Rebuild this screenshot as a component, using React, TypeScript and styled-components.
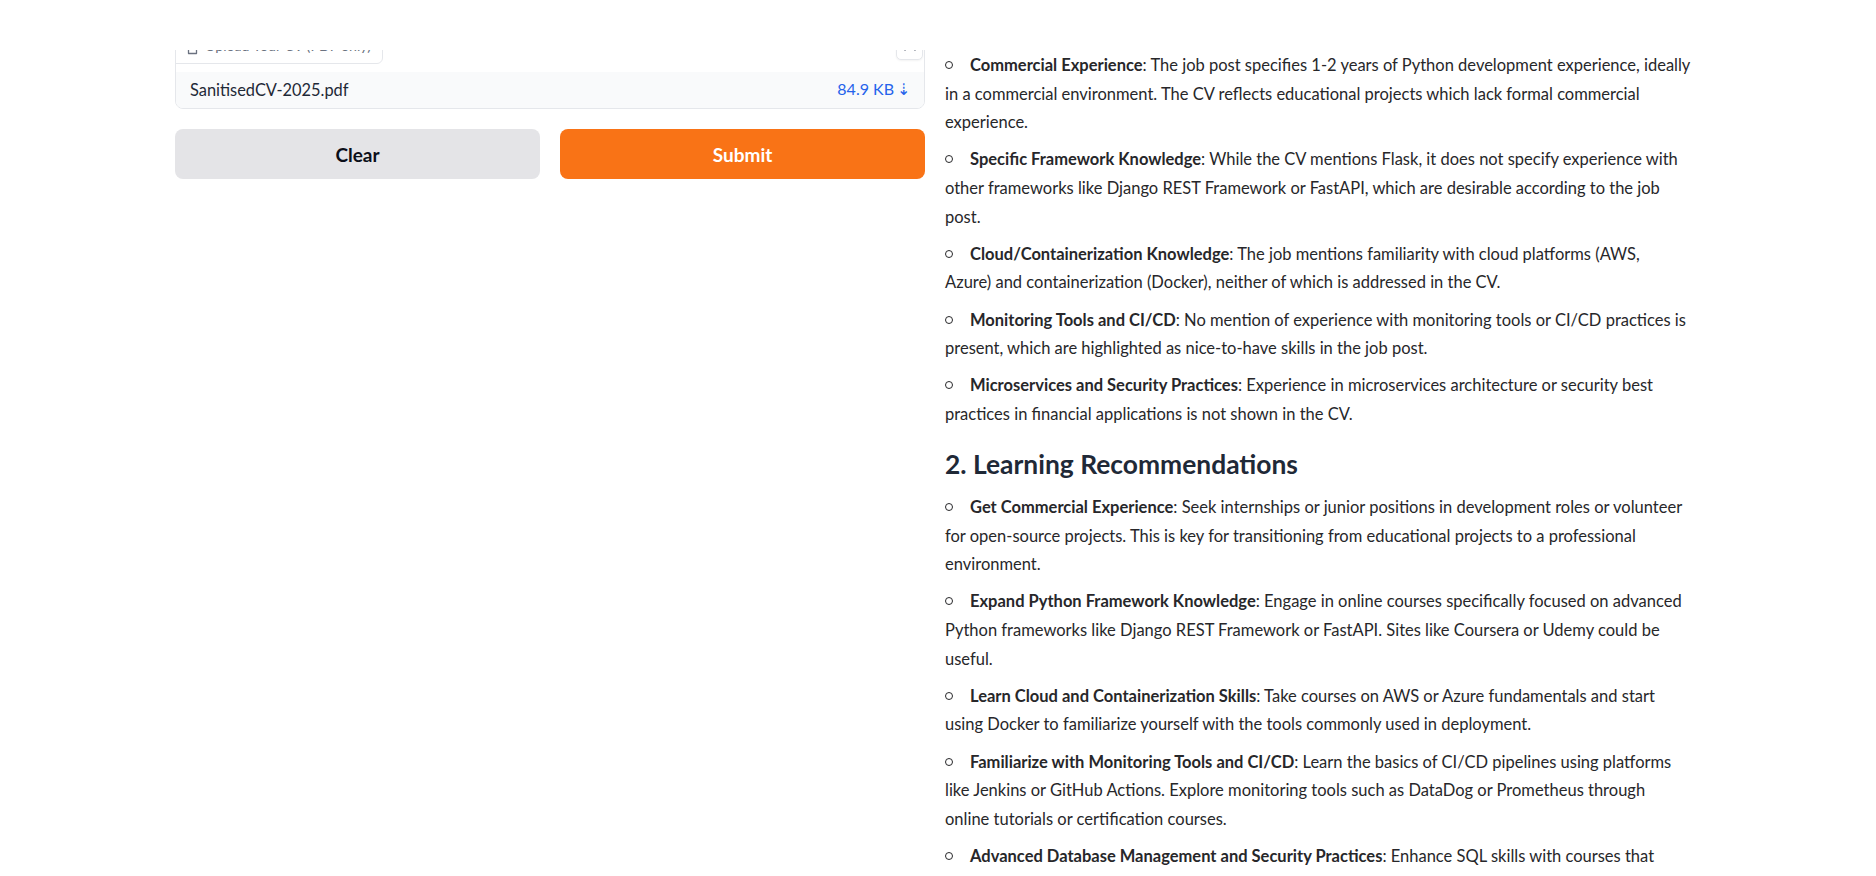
import React from "react";
import styled, { createGlobalStyle } from "styled-components";

const Global = createGlobalStyle`
  html, body { margin: 0; padding: 0; background: #ffffff; }
  body { font-family: Lato, "Noto Sans", "Liberation Sans", sans-serif; color: #1f2937; }
  * { box-sizing: border-box; }
`;

const Shell = styled.div`
  height: 876px;
  display: flex;
  flex-direction: column;
  overflow: hidden;
`;

const TopBand = styled.div`
  height: 50px;
  flex: none;
  background: #ffffff;
`;

const Viewport = styled.main`
  flex: 1;
  overflow: hidden;
`;

const Columns = styled.div`
  margin-top: -30px;
  padding: 0 175px;
  display: grid;
  grid-template-columns: 750px 1fr;
  column-gap: 20px;
  align-items: start;
`;

const LeftCol = styled.div`
  display: flex;
  flex-direction: column;
  gap: 20px;
`;

const FileBlock = styled.div`
  position: relative;
  border: 1px solid #e5e7eb;
  border-radius: 8px;
  padding-top: 51px;
  overflow: hidden;
  background: #ffffff;
`;

const BlockLabel = styled.div`
  position: absolute;
  top: -1px;
  left: -1px;
  height: 44px;
  display: flex;
  align-items: flex-end;
  gap: 7px;
  padding: 0 11px 8px 11px;
  border: 1px solid #e5e7eb;
  border-radius: 0 0 6px 0;
  background: #ffffff;
  color: #6b7280;
  font-size: 14.2px;
  line-height: 18px;
  white-space: nowrap;
`;

const IconButtons = styled.div`
  position: absolute;
  top: 12px;
  right: 1px;
  width: 27px;
  height: 27px;
  display: flex;
  align-items: flex-start;
  justify-content: center;
  padding-top: 5px;
  border: 1px solid #e5e7eb;
  border-radius: 5px;
  background: #ffffff;
  color: #6b7280;
  box-shadow: 0 1px 2px rgba(0, 0, 0, 0.05);
`;

const FileRow = styled.div`
  height: 36px;
  display: flex;
  align-items: center;
  justify-content: space-between;
  padding: 0 14px 2px 14px;
  background: #f9fafb;
  font-size: 16.4px;
`;

const FileName = styled.span`
  color: #1f2937;
`;

const FileSize = styled.a`
  color: #2563eb;
  text-decoration: none;
  font-size: 16px;
`;

const DownArrow = styled.span`
  margin-left: 3px;
`;

const ButtonRow = styled.div`
  display: grid;
  grid-template-columns: 1fr 1fr;
  gap: 20px;
`;

const Button = styled.button<{ $primary?: boolean }>`
  height: 50px;
  border: none;
  border-radius: 8px;
  font-family: Lato, "Noto Sans", sans-serif;
  font-size: 19px;
  font-weight: 700;
  cursor: pointer;
  background: ${(p) => (p.$primary ? "#f97316" : "#e4e4e7")};
  color: ${(p) => (p.$primary ? "#ffffff" : "#0b0f19")};
`;

const Prose = styled.div`
  padding-top: 31px;
  font-size: 16.5px;
  line-height: 28.6px;
  color: #27272a;
`;

const List = styled.ul`
  list-style: none;
  margin: 0;
  padding: 0;
`;

const Item = styled.li`
  margin: 0 0 8.6px 0;
  white-space: pre;
  &::before {
    content: "";
    display: inline-block;
    width: 6px;
    height: 6px;
    border: 1px solid #27272a;
    border-radius: 50%;
    margin-right: 17px;
    vertical-align: 2px;
  }
  strong {
    font-weight: 700;
  }
`;

const Heading = styled.h2`
  margin: 18px 0 12.5px 0;
  font-size: 26.4px;
  line-height: 34px;
  font-weight: 700;
  color: #1f2937;
`;

const gaps: [string, string][] = [
  [
    "Commercial Experience",
    "The job post specifies 1-2 years of Python development experience, ideally\nin a commercial environment. The CV reflects educational projects which lack formal commercial\nexperience.",
  ],
  [
    "Specific Framework Knowledge",
    "While the CV mentions Flask, it does not specify experience with\nother frameworks like Django REST Framework or FastAPI, which are desirable according to the job\npost.",
  ],
  [
    "Cloud/Containerization Knowledge",
    "The job mentions familiarity with cloud platforms (AWS,\nAzure) and containerization (Docker), neither of which is addressed in the CV.",
  ],
  [
    "Monitoring Tools and CI/CD",
    "No mention of experience with monitoring tools or CI/CD practices is\npresent, which are highlighted as nice-to-have skills in the job post.",
  ],
  [
    "Microservices and Security Practices",
    "Experience in microservices architecture or security best\npractices in financial applications is not shown in the CV.",
  ],
];

const recs: [string, string][] = [
  [
    "Get Commercial Experience",
    "Seek internships or junior positions in development roles or volunteer\nfor open-source projects. This is key for transitioning from educational projects to a professional\nenvironment.",
  ],
  [
    "Expand Python Framework Knowledge",
    "Engage in online courses specifically focused on advanced\nPython frameworks like Django REST Framework or FastAPI. Sites like Coursera or Udemy could be\nuseful.",
  ],
  [
    "Learn Cloud and Containerization Skills",
    "Take courses on AWS or Azure fundamentals and start\nusing Docker to familiarize yourself with the tools commonly used in deployment.",
  ],
  [
    "Familiarize with Monitoring Tools and CI/CD",
    "Learn the basics of CI/CD pipelines using platforms\nlike Jenkins or GitHub Actions. Explore monitoring tools such as DataDog or Prometheus through\nonline tutorials or certification courses.",
  ],
  [
    "Advanced Database Management and Security Practices",
    "Enhance SQL skills with courses that\nfocus on database optimization and security, especially in the context of financial\napplications.",
  ],
];

const FileIcon = () => (
  <svg width="11" height="13" viewBox="0 0 11 13" fill="none" stroke="currentColor" strokeWidth="1.3">
    <path d="M1.5 1.5h5l3 3v7h-8z" strokeLinejoin="round" />
  </svg>
);

const XIcon = () => (
  <svg width="12" height="12" viewBox="0 0 12 12" stroke="currentColor" strokeWidth="1.6" strokeLinecap="round">
    <path d="M1 1l10 10M11 1L1 11" />
  </svg>
);

export default function App() {
  return (
    <>
      <Global />
      <Shell>
        <TopBand />
        <Viewport>
          <Columns>
            <LeftCol>
              <FileBlock>
                <BlockLabel>
                  <FileIcon />
                  <span>Upload Your CV (PDF only)</span>
                </BlockLabel>
                <IconButtons>
                  <XIcon />
                </IconButtons>
                <FileRow>
                  <FileName>SanitisedCV-2025.pdf</FileName>
                  <FileSize href="#">
                    84.9 KB<DownArrow>⇣</DownArrow>
                  </FileSize>
                </FileRow>
              </FileBlock>
              <ButtonRow>
                <Button>Clear</Button>
                <Button $primary>Submit</Button>
              </ButtonRow>
            </LeftCol>
            <Prose>
              <List>
                {gaps.map(([b, t]) => (
                  <Item key={b}>
                    <strong>{b}</strong>
                    {": " + t}
                  </Item>
                ))}
              </List>
              <Heading>2. Learning Recommendations</Heading>
              <List>
                {recs.map(([b, t]) => (
                  <Item key={b}>
                    <strong>{b}</strong>
                    {": " + t}
                  </Item>
                ))}
              </List>
            </Prose>
          </Columns>
        </Viewport>
      </Shell>
    </>
  );
}
